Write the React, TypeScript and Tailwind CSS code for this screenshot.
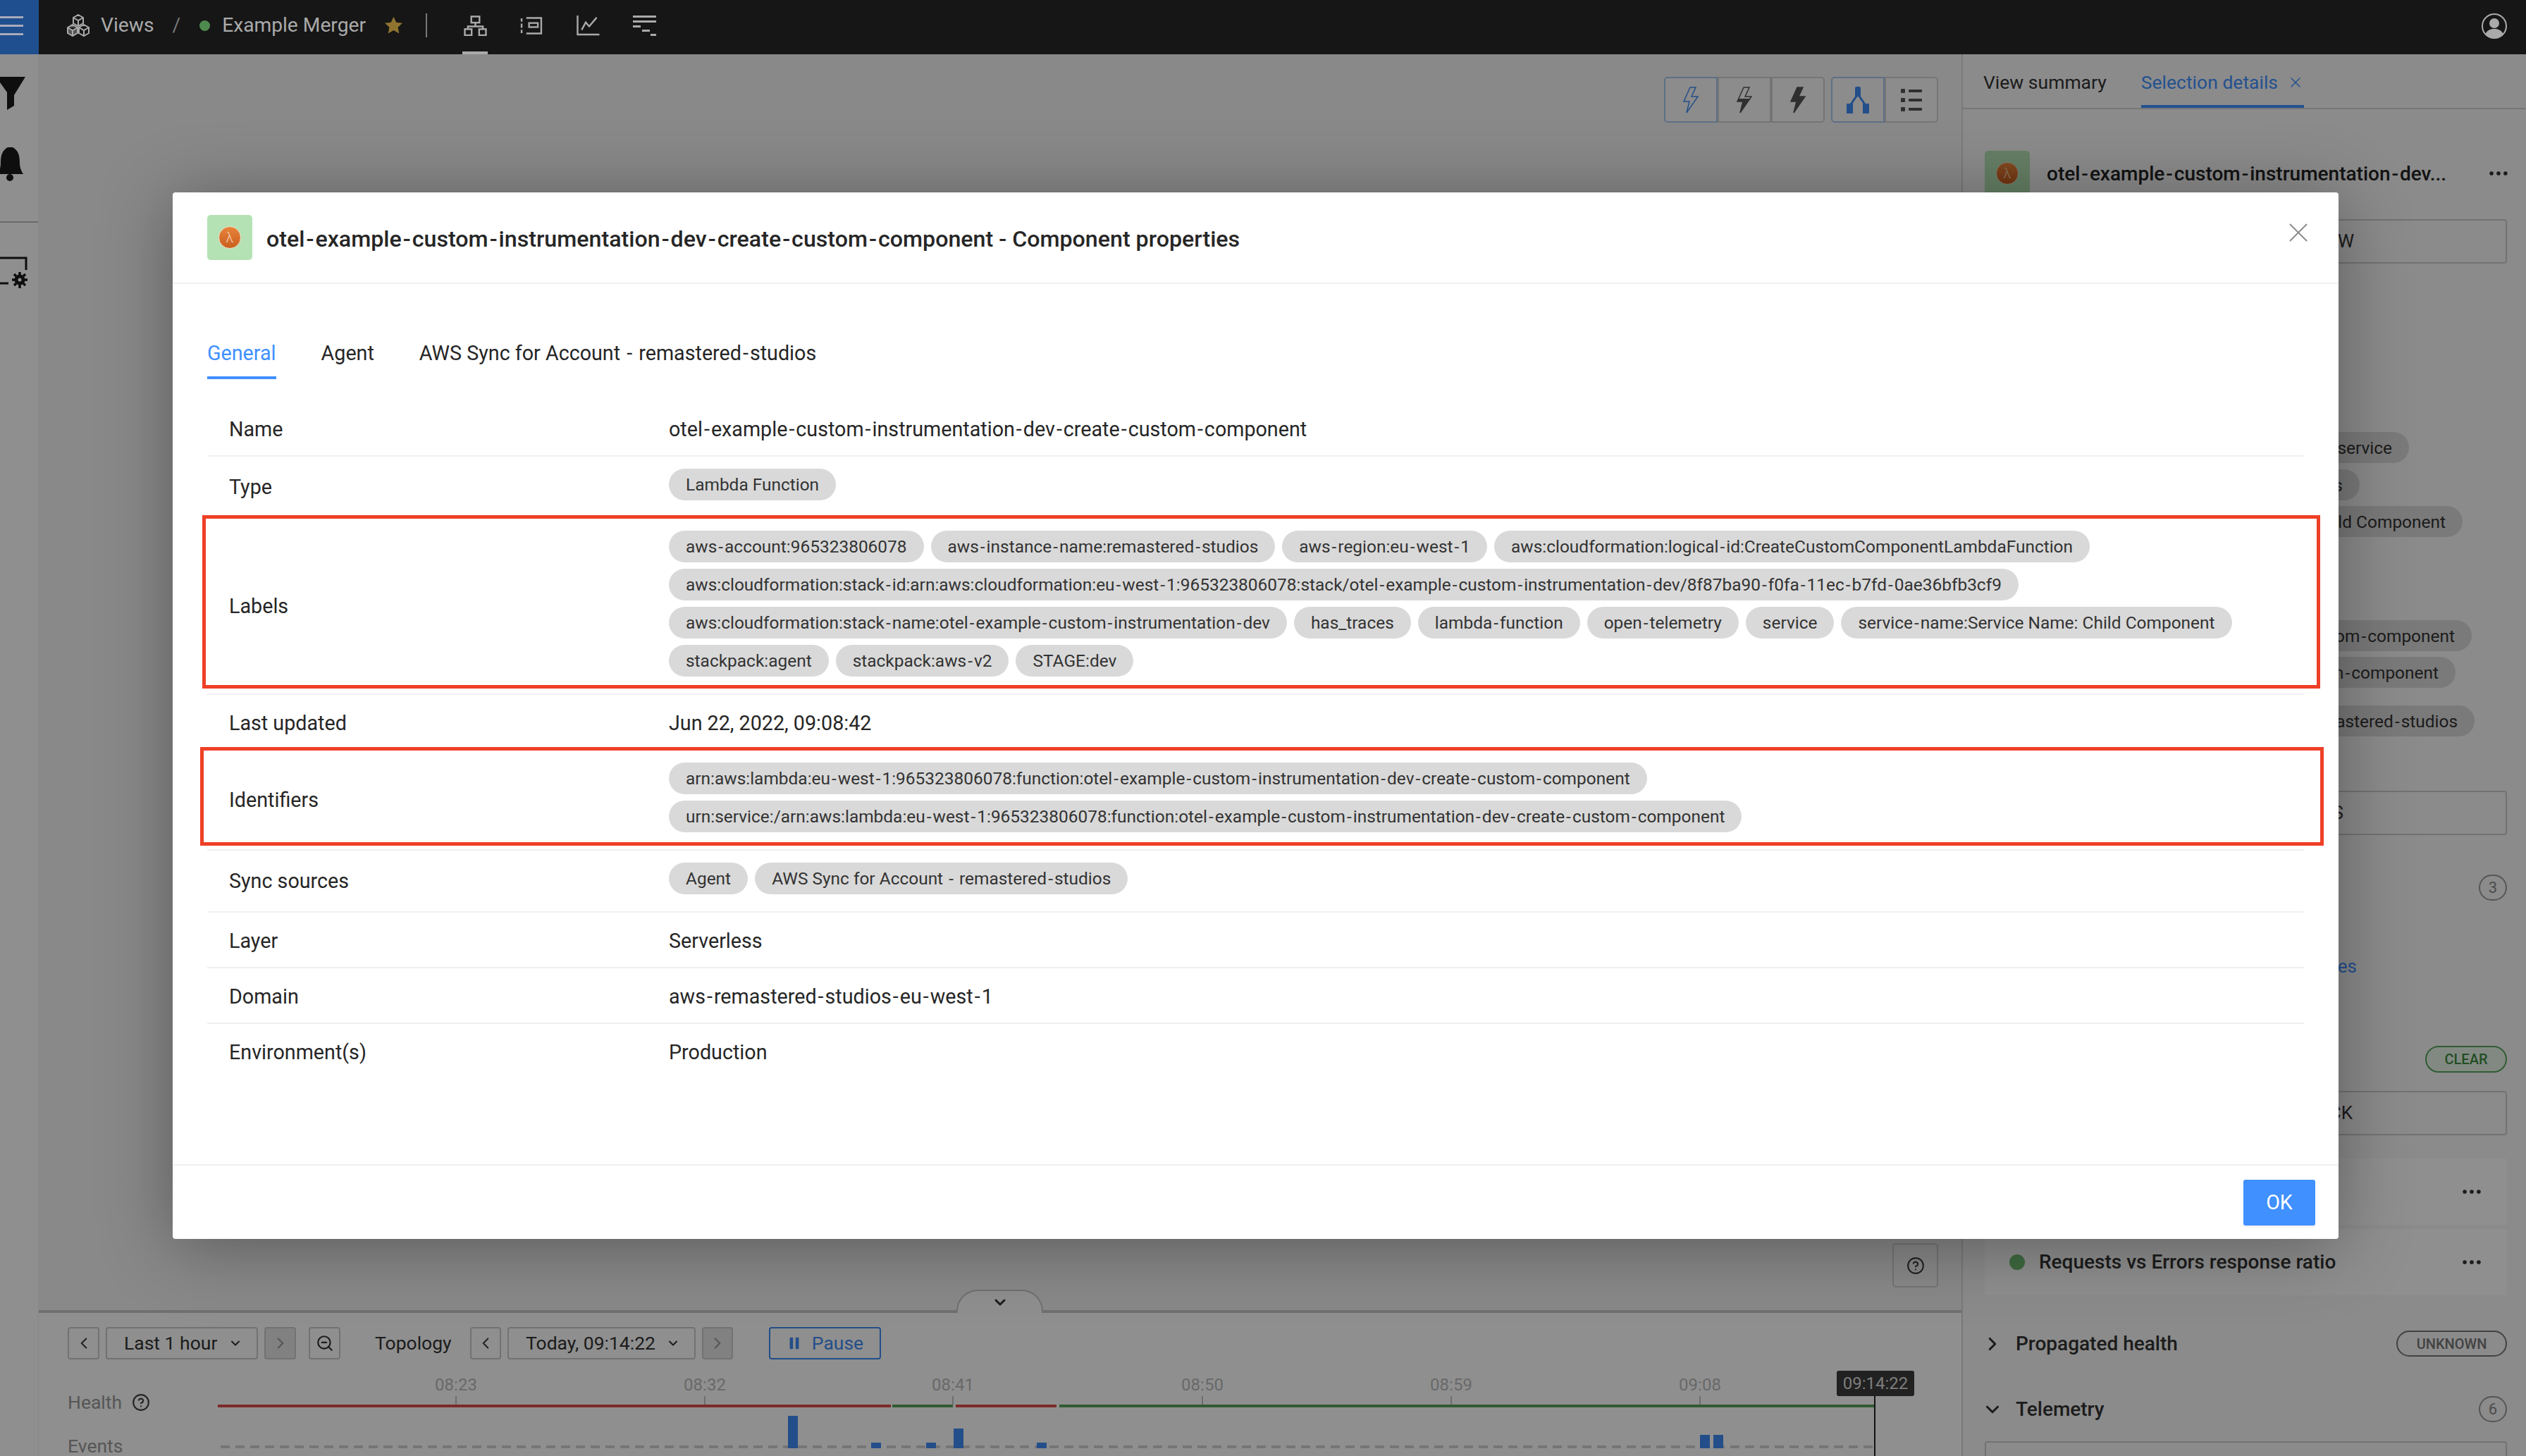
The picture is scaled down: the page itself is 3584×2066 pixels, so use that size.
import { ChevronDown, ChevronLeft, ChevronRight, CircleHelp, Ellipsis, Pause, X, ZoomOut } from 'lucide-react'
import type { ReactNode } from 'react'

const labels = [
  'aws-account:965323806078',
  'aws-instance-name:remastered-studios',
  'aws-region:eu-west-1',
  'aws:cloudformation:logical-id:CreateCustomComponentLambdaFunction',
  'aws:cloudformation:stack-id:arn:aws:cloudformation:eu-west-1:965323806078:stack/otel-example-custom-instrumentation-dev/8f87ba90-f0fa-11ec-b7fd-0ae36bfb3cf9',
  'aws:cloudformation:stack-name:otel-example-custom-instrumentation-dev',
  'has_traces',
  'lambda-function',
  'open-telemetry',
  'service',
  'service-name:Service Name: Child Component',
  'stackpack:agent',
  'stackpack:aws-v2',
  'STAGE:dev',
]

const identifiers = [
  'arn:aws:lambda:eu-west-1:965323806078:function:otel-example-custom-instrumentation-dev-create-custom-component',
  'urn:service:/arn:aws:lambda:eu-west-1:965323806078:function:otel-example-custom-instrumentation-dev-create-custom-component',
]

const ticks: [number, string][] = [
  [338, '08:23'],
  [691, '08:32'],
  [1043, '08:41'],
  [1397, '08:50'],
  [1750, '08:59'],
  [2103, '09:08'],
]

const healthBars: [number, number, string][] = [
  [0, 955, '#e04b4b'],
  [957, 86, '#58a55c'],
  [1047, 143, '#e04b4b'],
  [1194, 1157, '#58a55c'],
]

const eventBars: [number, number][] = [
  [809, 46],
  [927, 8],
  [1005, 8],
  [1044, 28],
  [1162, 8],
  [2103, 19],
  [2122, 19],
]

// the hyphen in the reference's Roboto is wider than the installed one
function Hy({ text }: { text: string }) {
  const parts = text.split('-')
  return (
    <>
      {parts.map((p, i) => (
        <span key={i}>
          {i > 0 && <span className="px-[2px]">-</span>}
          {p}
        </span>
      ))}
    </>
  )
}

function Chip({ children }: { children: string }) {
  return (
    <span className="mr-[10px] mb-[9px] flex h-[45px] items-center rounded-full bg-[#d9d9d9] px-[24px] pt-[2px] text-[24.45px] whitespace-nowrap text-[#333]">
      <span><Hy text={children} /></span>
    </span>
  )
}

function TextRow({ label, value, last }: { label: string; value: string; last?: boolean }) {
  return (
    <div className={`flex pt-[23px] pb-[20px] pl-[31px] text-[28.7px] leading-[34px] text-[#262626] ${last ? '' : 'border-b-2 border-[#f0f0f0]'}`}>
      <div className="w-[624px]">{label}</div>
      <div><Hy text={value} /></div>
    </div>
  )
}

function ChipRow({ label, chips }: { label: string; chips: string[] }) {
  return (
    <div className="flex items-center border-b-2 border-[#f0f0f0] pt-[17px] pb-[15px] pl-[31px] text-[28.7px] text-[#262626]">
      <div className="w-[624px] shrink-0">{label}</div>
      <div className="flex flex-1 flex-wrap">
        {chips.map((c) => (
          <Chip key={c}>{c}</Chip>
        ))}
      </div>
    </div>
  )
}

function LambdaIcon() {
  return (
    <div className="flex h-[64px] w-[64px] shrink-0 items-center justify-center rounded-[5px] bg-[#b5e2b5]">
      <div className="flex h-[32px] w-[32px] items-center justify-center rounded-full border border-[#f5d9c0] bg-gradient-to-b from-[#e8833a] to-[#c95f1e] text-[20px] leading-none font-light text-[#f7cfae]">
        λ
      </div>
    </div>
  )
}

function Bolt({ mode }: { mode: 'outline' | 'half' | 'solid' }) {
  return (
    <svg width="24" height="38" viewBox="0 0 24 38">
      <defs>
        <linearGradient id="bolt-half" x1="0" y1="0" x2="0" y2="1">
          <stop offset="0.45" stopColor="#fff" />
          <stop offset="0.45" stopColor="#555" />
        </linearGradient>
      </defs>
      <path
        d="M11 1 L2 21 H10 L6 37 L22 14 H13 L19 1 Z"
        fill={mode === 'outline' ? 'none' : mode === 'half' ? 'url(#bolt-half)' : '#555'}
        stroke={mode === 'outline' ? '#3f8cf5' : '#555'}
        strokeWidth="1.5"
      />
    </svg>
  )
}

function ToolButton({ children, active, last }: { children: ReactNode; active?: boolean; last?: boolean }) {
  return (
    <div className={`flex h-[65px] w-[76px] items-center justify-center border-2 ${active ? 'border-[#a8c8ee]' : 'border-[#d0d0d0]'} ${last ? 'rounded-r-[5px]' : ''} ${active ? 'rounded-l-[5px]' : ''} bg-[#fafafa]`}>
      {children}
    </div>
  )
}

function Step({ dir, disabled, wide }: { dir: 'l' | 'r'; disabled?: boolean; wide?: boolean }) {
  const Icon = dir === 'l' ? ChevronLeft : ChevronRight
  return (
    <div className={`flex h-[46px] ${wide ? 'w-[44px]' : 'w-[45px]'} items-center justify-center rounded-[4px] border-2 border-[#ccc] ${disabled ? 'bg-[#e6e6e6] text-[#999]' : 'text-[#444]'}`}>
      <Icon size={26} strokeWidth={2} />
    </div>
  )
}

function SideInput({ text, pad, mt }: { text: string; pad: string; mt: string }) {
  return (
    <div className={`${mt} ${pad} mr-[27px] ml-[31px] flex h-[63px] shrink-0 items-center justify-end rounded-[4px] border-2 border-[#ccc] text-[26px] text-[#333]`}>
      {text}
    </div>
  )
}

function SidePill({ text, cls }: { text: string; cls: string }) {
  return (
    <div className={`${cls} flex h-[44px] shrink-0 items-center self-end rounded-full bg-[#d9d9d9] px-[24px] pt-[2px] text-[24.45px] whitespace-nowrap text-[#333]`}>
      <span><Hy text={text} /></span>
    </div>
  )
}

function TopIcons() {
  const stroke = '#aaa'
  return (
    <div className="relative flex h-full items-center gap-[47px] pb-[4px] pl-[2px]">
      <svg width="33" height="29" viewBox="0 0 34 30" fill="none" stroke={stroke} strokeWidth="2.5">
        <rect x="11" y="1.5" width="12" height="9" />
        <path d="M17 11v5M6 20v-4h22v4" />
        <rect x="1.5" y="20" width="10" height="9" />
        <rect x="22.5" y="20" width="10" height="9" />
      </svg>
      <svg width="32" height="25" viewBox="0 0 33 26" fill="none" stroke={stroke} strokeWidth="2.5">
        <path d="M9 1.5h22v23H9M2 2v5M2 10v6M2 19v5" />
        <rect x="13" y="9" width="13" height="6" />
      </svg>
      <svg width="34" height="29" viewBox="0 0 34 30" fill="none" stroke={stroke} strokeWidth="2.5">
        <path d="M2 0v28h32M8 21l6-11 5 6 11-13" />
      </svg>
      <svg width="33" height="29" viewBox="0 0 33 29" fill={stroke}>
        <rect x="0" y="0" width="33" height="3" />
        <rect x="0" y="7" width="33" height="3" />
        <rect x="0" y="14" width="11" height="3" />
        <rect x="13" y="20" width="11" height="3" />
        <rect x="25" y="26" width="8" height="3" />
      </svg>
      <div className="absolute bottom-0 left-0 h-[4px] w-[36px] bg-[#aaa]" />
    </div>
  )
}

export default function App() {
  return (
    <div className="flex h-screen flex-col overflow-hidden bg-white font-[Roboto,sans-serif]">
      {/* top bar sits above the modal mask */}
      <header className="flex h-[77px] shrink-0 items-center bg-[#161616] text-[28.2px] text-[#aaa]">
        <div className="flex h-full w-[55px] shrink-0 flex-col justify-center gap-[9px] bg-[#1f4f8f] pb-[4px]">
          <div className="h-[3px] w-[33px] bg-[#aab]" />
          <div className="h-[3px] w-[33px] bg-[#aab]" />
          <div className="h-[3px] w-[33px] bg-[#aab]" />
        </div>
        <div className="flex items-center pb-[4px]">
          <svg className="ml-[39px]" width="34" height="32" viewBox="0 0 34 32" fill="none" stroke="#aaa" strokeWidth="2">
            <path d="M17 1l7 4v8l-7 4-7-4V5zM10 5l7 4 7-4M17 9v8" />
            <path d="M9 15l7 4v8l-7 4-7-4v-8zM2 19l7 4 7-4M9 23v8" fill="#555" />
            <path d="M25 15l7 4v8l-7 4-7-4v-8zM18 19l7 4 7-4M25 23v8" />
          </svg>
          <span className="ml-[15px]">Views</span>
          <span className="ml-[26px] text-[#777]">/</span>
          <span className="ml-[27px] h-[15px] w-[15px] rounded-full bg-[#4f8a4f]" />
          <span className="ml-[17px]">Example Merger</span>
          <svg className="ml-[25px]" width="29" height="28" viewBox="0 0 24 24" fill="#8f7430">
            <path d="M12 1.5l3.2 6.9 7.5.9-5.5 5.1 1.5 7.4-6.7-3.7-6.7 3.7 1.5-7.4L1.3 9.3l7.5-.9z" />
          </svg>
          <div className="mr-[50px] ml-[31px] h-[34px] w-[2px] bg-[#777]" />
        </div>
        <TopIcons />
        <svg className="mr-[26px] mb-[4px] ml-auto" width="38" height="36" viewBox="0 0 38 36" fill="none">
          <circle cx="19" cy="18" r="17" stroke="#aaa" strokeWidth="2" />
          <circle cx="19" cy="14" r="7" fill="#aaa" />
          <path d="M6 30c3-7 8-8 13-8s10 1 13 8c-3 3-8 5-13 5s-10-2-13-5z" fill="#aaa" />
        </svg>
      </header>

      <div className="relative flex min-h-0 flex-1">
        <aside className="flex w-[55px] shrink-0 flex-col overflow-hidden border-r border-[#f0f0f0] bg-white">
          <svg className="mt-[32px] shrink-0" width="36" height="47" viewBox="0 0 36 47">
            <path d="M0 0h36L20 26v15l-10 6V22L0 8z" fill="#1a1a1a" />
          </svg>
          <svg className="mt-[53px] shrink-0" width="36" height="48" viewBox="0 0 36 48" fill="#1a1a1a">
            <path d="M14 0c-7 4-10 10-10 22 0 7-2 12-4 16h36c-3-5-5-9-5-16C31 10 28 4 21 0z" transform="translate(-3 0)" />
            <circle cx="14" cy="43" r="5" />
          </svg>
          <div className="mt-[57px] h-[2px] w-full shrink-0 bg-[#bbb]" />
          <svg className="mt-[48px] shrink-0" width="40" height="47" viewBox="0 0 40 47" fill="none" stroke="#1a1a1a" strokeWidth="3">
            <path d="M0 2h37v17M0 38h12" />
            <circle cx="28" cy="33" r="5" strokeWidth="5" />
            <path d="M28 22v4M28 40v5M17 33h4M35 33h4M20 25l3 3M33 38l3 3M36 25l-3 3M23 38l-3 3" strokeWidth="3.5" />
          </svg>
        </aside>

        <main className="flex min-w-0 flex-1 flex-col bg-[#f4f4f4]">
          <div className="flex flex-1 flex-col items-end justify-between pt-[32px] pr-[33px] pb-[32px]">
            <div className="flex gap-[9px]">
              <div className="flex">
                <ToolButton active><Bolt mode="outline" /></ToolButton>
                <ToolButton><Bolt mode="half" /></ToolButton>
                <ToolButton last><Bolt mode="solid" /></ToolButton>
              </div>
              <div className="flex">
                <ToolButton active>
                  <svg width="32" height="38" viewBox="0 0 32 38" fill="#3f8cf5">
                    <rect x="12" y="0" width="8" height="14" rx="2" />
                    <rect x="0" y="24" width="9" height="14" />
                    <rect x="23" y="24" width="9" height="14" />
                    <path d="M15 12L4 28M17 12l11 16" stroke="#3f8cf5" strokeWidth="3" />
                  </svg>
                </ToolButton>
                <ToolButton last>
                  <svg width="30" height="32" viewBox="0 0 30 32" fill="#555">
                    <rect x="0" y="0" width="6" height="6" rx="1" />
                    <rect x="11" y="1" width="19" height="4" rx="1" />
                    <rect x="0" y="13" width="6" height="6" rx="1" />
                    <rect x="11" y="14" width="19" height="4" rx="1" />
                    <rect x="0" y="26" width="6" height="6" rx="1" />
                    <rect x="11" y="27" width="19" height="4" rx="1" />
                  </svg>
                </ToolButton>
              </div>
            </div>
            <div className="flex h-[63px] w-[65px] items-center justify-center rounded-[5px] border-2 border-[#d0d0d0] text-[#444]">
              <CircleHelp size={26} strokeWidth={2} />
            </div>
          </div>

          <section className="relative h-[207px] shrink-0 border-t-4 border-[#c8c8c8] bg-white pt-[20px] pl-[41px]">
            {/* collapse tab on the timeline edge */}
            <div className="absolute top-[-33px] left-[1302px] flex h-[33px] w-[123px] items-center justify-center rounded-t-[30px] border-x-2 border-t-2 border-[#c8c8c8] bg-white">
              <ChevronDown size={24} strokeWidth={3} className="text-[#333]" />
            </div>
            <div className="flex items-center text-[26.5px] text-[#333]">
              <Step dir="l" />
              <div className="mx-[9px] flex h-[46px] w-[216px] items-center justify-between rounded-[4px] border-2 border-[#ccc] pr-[20px] pl-[24px]">
                <span>Last 1 hour</span>
                <ChevronDown size={20} strokeWidth={2.5} />
              </div>
              <Step dir="r" disabled />
              <div className="ml-[18px] flex h-[46px] w-[45px] items-center justify-center rounded-[4px] border-2 border-[#ccc]">
                <ZoomOut size={26} strokeWidth={2} />
              </div>
              <span className="mr-[25px] ml-[49px] w-[110px]">Topology</span>
              <Step dir="l" wide />
              <div className="mx-[9px] flex h-[46px] w-[267px] items-center justify-between rounded-[4px] border-2 border-[#ccc] pr-[20px] pl-[24px]">
                <span className="whitespace-nowrap">Today, 09:14:22</span>
                <ChevronDown size={20} strokeWidth={2.5} />
              </div>
              <Step dir="r" disabled wide />
              <div className="ml-[51px] flex h-[46px] w-[159px] items-center justify-center gap-[14px] rounded-[4px] border-2 border-[#3f8cf5] text-[#3f8cf5]">
                <Pause size={22} fill="#3f8cf5" strokeWidth={0} />
                <span>Pause</span>
              </div>
            </div>
            <div className="mt-[16px] flex">
              <div className="w-[213px] shrink-0 pt-[29px] text-[26.5px] leading-[32px] text-[#999]">
                <div className="flex items-center gap-[14px]">
                  Health
                  <CircleHelp size={26} strokeWidth={2} className="text-[#444]" />
                </div>
                <div className="mt-[30px]">Events</div>
              </div>
              <svg width="2420" height="121" viewBox="0 0 2420 121" className="shrink-0">
                {ticks.map(([x, t]) => (
                  <g key={t}>
                    <line x1={x} x2={x} y1="36" y2="48" stroke="#c4c4c4" strokeWidth="2" />
                    <text x={x} y="28" textAnchor="middle" fontSize="24" fill="#bbb">{t}</text>
                  </g>
                ))}
                {healthBars.map(([x, w, c]) => (
                  <rect key={x} x={x} y="48" width={w} height="4" fill={c} />
                ))}
                {Array.from({ length: 112 }, (_, i) => (
                  <rect key={i} x={4 + i * 21} y="106" width="13" height="4" fill="#d0d0d0" />
                ))}
                {eventBars.map(([x, h]) => (
                  <rect key={x} x={x} y={110 - h} width="14" height={h} fill="#3f8cf5" />
                ))}
                <line x1="2351" x2="2351" y1="36" y2="121" stroke="#222" strokeWidth="2" />
                <rect x="2297" y="0" width="110" height="36" rx="3" fill="#3b3b3b" />
                <text x="2352" y="26" textAnchor="middle" fontSize="24" fill="#ddd">09:14:22</text>
              </svg>
            </div>
          </section>
        </main>

        <aside className="flex w-[801px] shrink-0 flex-col border-l-2 border-[#d8d8d8] bg-[#f8f8f8]">
          <div className="flex h-[78px] shrink-0 gap-[49px] border-b-2 border-[#d4d4d4] pt-[23px] pl-[29px] text-[26.5px] text-[#333]">
            <span className="leading-[34px]">View summary</span>
            <span className="relative flex h-[53px] w-[231px] items-start justify-between text-[#4090ff]">
              <span className="leading-[34px] whitespace-nowrap">Selection details</span>
              <X size={24} strokeWidth={1.5} className="mt-[5px]" />
              <span className="absolute right-0 bottom-0 left-0 h-[4px] bg-[#4090ff]" />
            </span>
          </div>
          <div className="mt-[59px] ml-[31px] flex shrink-0 items-center">
            <LambdaIcon />
            <span className="ml-[24px] w-[570px] pt-[2px] text-[28px] font-medium whitespace-nowrap text-[#222]"><Hy text="otel-example-custom-instrumentation-dev..." /></span>
            <Ellipsis size={34} className="ml-[54px] text-[#333]" />
          </div>
          <SideInput text="VIEW" pad="pr-[215px]" mt="mt-[33px]" />
          <SidePill text="service" cls="mt-[239px] mr-[166px]" />
          <SidePill text="has_traces" cls="mt-[9px] mr-[236px]" />
          <SidePill text="Child Component" cls="mt-[8px] mr-[90px]" />
          <SidePill text="custom-component" cls="mt-[118px] mr-[77px]" />
          <SidePill text="custom-component" cls="mt-[8px] mr-[100px]" />
          <SidePill text="remastered-studios" cls="mt-[25px] mr-[73px]" />
          <SideInput text="S" pad="pr-[230px]" mt="mt-[77px]" />
          <div className="mt-[56px] mr-[27px] flex h-[37px] w-[40px] shrink-0 items-center justify-center self-end rounded-full border-2 border-[#999] text-[22px] text-[#888]">3</div>
          <div className="mt-[78px] mr-[240px] shrink-0 self-end text-[26px] leading-[30px] text-[#4090ff]">es</div>
          <div className="mt-[98px] mr-[27px] flex h-[38px] w-[116px] shrink-0 items-center justify-center self-end rounded-full border-2 border-[#58a55c] bg-[#e8f5e8] text-[20px] font-medium text-[#3c8a40]">CLEAR</div>
          <SideInput text="CK" pad="pr-[217px]" mt="mt-[26px]" />
          <div className="mt-[33px] mr-[27px] ml-[31px] flex h-[94px] shrink-0 items-center justify-end rounded-[4px] bg-white pr-[33px]">
            <Ellipsis size={34} className="text-[#333]" />
          </div>
          <div className="mt-[6px] mr-[27px] ml-[31px] flex h-[94px] shrink-0 items-center rounded-[4px] bg-white pr-[33px] pl-[35px]">
            <span className="h-[22px] w-[22px] rounded-full bg-[#6fbf73]" />
            <span className="ml-[20px] text-[28px] font-medium text-[#333]">Requests vs Errors response ratio</span>
            <Ellipsis size={34} className="ml-auto text-[#333]" />
          </div>
          <div className="mt-[50px] mr-[27px] ml-[27px] flex h-[37px] shrink-0 items-center">
            <ChevronRight size={30} strokeWidth={2.5} className="text-[#333]" />
            <span className="ml-[18px] text-[28px] font-medium text-[#333]">Propagated health</span>
            <span className="ml-auto flex h-[37px] w-[157px] items-center justify-center rounded-full border-2 border-[#777] text-[20px] font-medium text-[#777]">UNKNOWN</span>
          </div>
          <div className="mt-[56px] mr-[27px] ml-[27px] flex h-[37px] shrink-0 items-center">
            <ChevronDown size={30} strokeWidth={2.5} className="text-[#333]" />
            <span className="ml-[18px] text-[28px] font-medium text-[#333]">Telemetry</span>
            <span className="ml-auto flex h-[37px] w-[40px] items-center justify-center rounded-full border-2 border-[#999] text-[22px] text-[#888]">6</span>
          </div>
          <div className="mt-[27px] mr-[27px] ml-[31px] h-[100px] shrink-0 rounded-[4px] border-2 border-[#ccc]" />
        </aside>

        {/* modal mask, top bar stays out of it */}
        <div className="absolute inset-0 flex items-start bg-black/[0.44] pt-[196px] pl-[245px]">
          <div className="relative flex h-[1485px] w-[3073px] flex-col rounded-[4px] bg-white shadow-[0_10px_100px_rgba(0,0,0,0.35)]">
            <div className="flex h-[130px] shrink-0 items-center border-b-2 border-[#f0f0f0] pl-[49px] text-[32.2px] font-medium text-[#262626]">
              <LambdaIcon />
              <span className="ml-[20px] pt-[4px]"><Hy text="otel-example-custom-instrumentation-dev-create-custom-component" /></span>
              <span className="ml-[8px] pt-[4px]">- Component properties</span>
              <X size={46} strokeWidth={1} className="absolute top-[34px] right-[34px] text-[#8c8c8c]" />
            </div>
            <div className="mt-[73px] ml-[49px] flex h-[62px] shrink-0 gap-[64px] text-[28.7px] text-[#262626]">
              <span className="h-[62px] border-b-4 border-[#4090ff] leading-[50px] text-[#4090ff]">General</span>
              <span className="leading-[50px]">Agent</span>
              <span className="leading-[50px]"><Hy text="AWS Sync for Account - remastered-studios" /></span>
            </div>
            <div className="mt-[31px] mr-[49px] ml-[49px] flex-1">
              <TextRow label="Name" value="otel-example-custom-instrumentation-dev-create-custom-component" />
              <ChipRow label="Type" chips={['Lambda Function']} />
              <ChipRow label="Labels" chips={labels} />
              <TextRow label="Last updated" value="Jun 22, 2022, 09:08:42" />
              <ChipRow label="Identifiers" chips={identifiers} />
              <ChipRow label="Sync sources" chips={['Agent', 'AWS Sync for Account - remastered-studios']} />
              <TextRow label="Layer" value="Serverless" />
              <TextRow label="Domain" value="aws-remastered-studios-eu-west-1" />
              <TextRow label="Environment(s)" value="Production" last />
            </div>
            <div className="flex h-[106px] shrink-0 items-start justify-end border-t-2 border-[#f0f0f0] pt-[20px] pr-[33px]">
              <div className="flex h-[65px] w-[102px] items-center justify-center rounded-[3px] bg-[#4090ff] text-[28.7px] text-white shadow-[0_3px_0_rgba(0,0,0,0.04)]">OK</div>
            </div>
            {/* red annotation boxes */}
            <div className="absolute top-[458px] left-[42px] h-[246px] w-[3005px] border-[5px] border-[#ee4027]" />
            <div className="absolute top-[787px] left-[39px] h-[140px] w-[3013px] border-[5px] border-[#ee4027]" />
          </div>
        </div>
      </div>
    </div>
  )
}
